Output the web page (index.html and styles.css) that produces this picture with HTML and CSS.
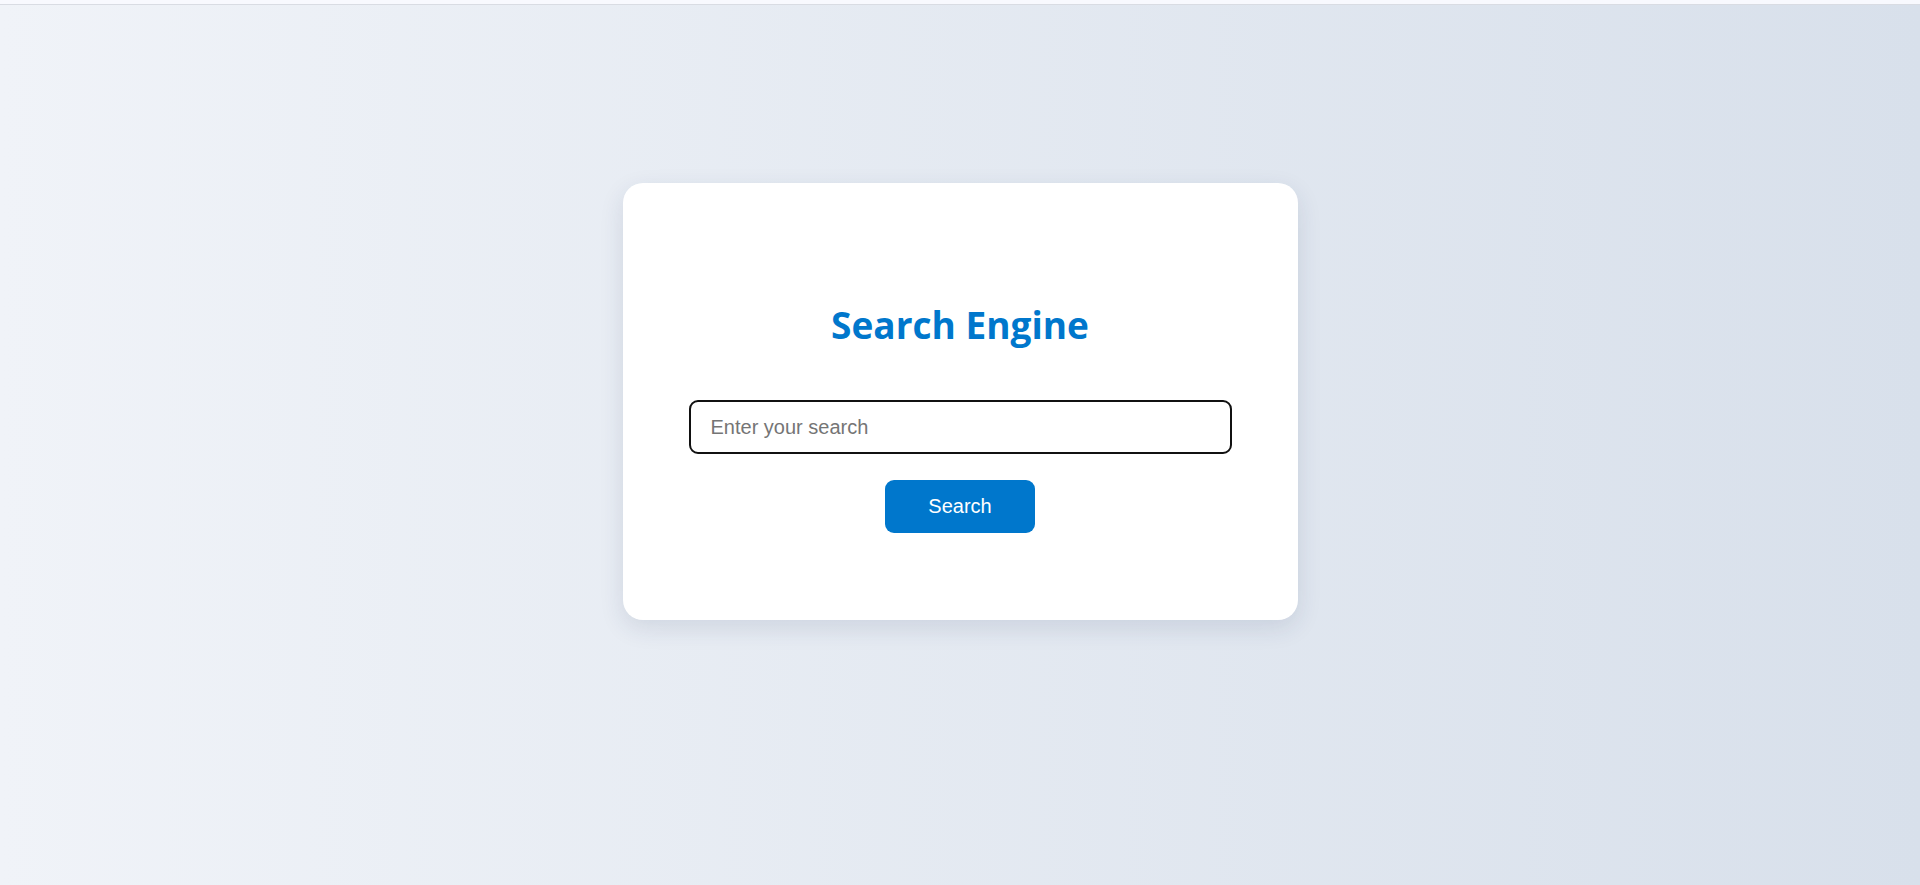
FILE: index.html
```html
<!DOCTYPE html>
<html lang="en">
<head>
<meta charset="utf-8">
<title>Search Engine</title>
<link rel="stylesheet" href="styles.css">
</head>
<body>
<div class="topbar"></div>
<main class="page">
  <section class="card">
    <h1 class="title">Search Engine</h1>
    <form class="search-form" onsubmit="return false;">
      <input class="search-input" type="text" placeholder="Enter your search">
      <button class="search-button" type="submit">Search</button>
    </form>
  </section>
</main>
</body>
</html>
```

FILE: styles.css
```css
html, body {
  margin: 0;
  padding: 0;
  height: 100%;
}

body {
  font-family: "Liberation Sans", Arial, sans-serif;
  background: linear-gradient(to right, #f0f3f8, #d8e0eb);
  display: flex;
  flex-direction: column;
}

.topbar {
  height: 4px;
  background: #f8f9fe;
  border-bottom: 1px solid #d9dce3;
  flex: none;
}

.page {
  flex: 1;
  display: flex;
  justify-content: center;
  align-items: flex-start;
  padding-top: 178px;
}

.card {
  width: 675px;
  box-sizing: border-box;
  background: #ffffff;
  border-radius: 20px;
  box-shadow: 0 8px 24px rgba(30, 50, 90, 0.12);
  padding: 117px 66px 87px;
  display: flex;
  flex-direction: column;
  align-items: center;
}

.title {
  margin: 0;
  font-family: "Open Sans", "Noto Sans", sans-serif;
  font-weight: 700;
  font-size: 37px;
  line-height: 50px;
  color: #0077cc;
  letter-spacing: 0;
}

.search-form {
  width: 100%;
  display: flex;
  flex-direction: column;
  align-items: center;
  margin-top: 50px;
  gap: 26px;
}

.search-input {
  width: 100%;
  height: 54px;
  box-sizing: border-box;
  border: 2px solid #111111;
  border-radius: 9px;
  padding: 0 20px;
  font-family: "Liberation Sans", Arial, sans-serif;
  font-size: 20px;
  color: #222;
  outline: none;
}

.search-input::placeholder {
  color: #757575;
}

.search-button {
  width: 150px;
  height: 53px;
  border: none;
  border-radius: 9px;
  background: #0077cc;
  color: #ffffff;
  font-family: "Liberation Sans", Arial, sans-serif;
  font-size: 20px;
  cursor: pointer;
}
```
